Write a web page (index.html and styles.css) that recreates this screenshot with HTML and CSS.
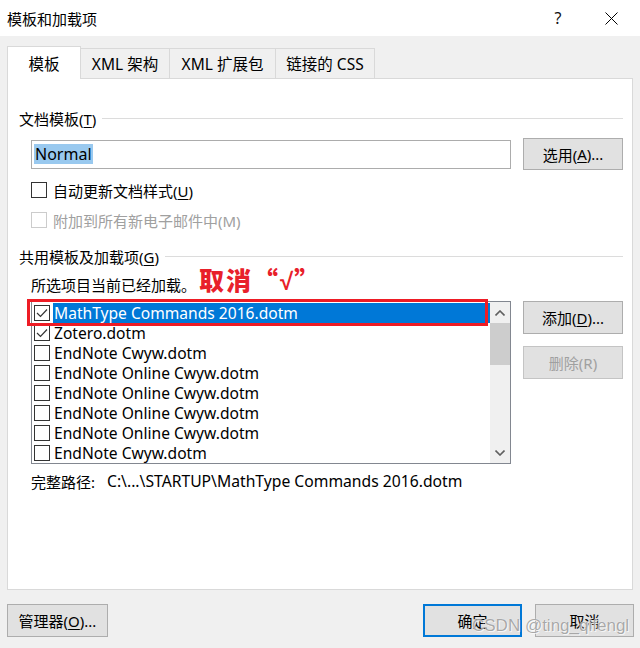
FILE: index.html
```html
<!DOCTYPE html>
<html lang="zh-CN">
<head>
<meta charset="utf-8">
<title>模板和加载项</title>
<link rel="stylesheet" href="styles.css">
</head>
<body>
<div class="dialog">
  <div class="titlebar">
    <span class="title">模板和加载项</span>
    <span class="help">?</span>
    <span class="close">
      <svg width="13" height="13" viewBox="0 0 13 13"><path d="M0.5 0.5 L12.5 12.5 M12.5 0.5 L0.5 12.5" stroke="#000" stroke-width="1" fill="none"/></svg>
    </span>
  </div>

  <div class="tabs">
    <div class="tab tab-sel">模板</div>
    <div class="tab tab-2">XML 架构</div>
    <div class="tab tab-3">XML 扩展包</div>
    <div class="tab tab-4">链接的 CSS</div>
  </div>

  <div class="panel">
    <div class="group-head"><span>文档模板(<u>T</u>)</span><i class="rule"></i></div>

    <div class="row-input">
      <div class="textbox"><span class="sel-text">Normal</span></div>
      <div class="btn btn-side">选用(<u>A</u>)...</div>
    </div>

    <div class="check-row check-row-1">
      <span class="cb"></span><span>自动更新文档样式(<u>U</u>)</span>
    </div>
    <div class="check-row check-row-2 disabled">
      <span class="cb cb-dis"></span><span>附加到所有新电子邮件中(M)</span>
    </div>

    <div class="group-head group-head-2"><span>共用模板及加载项(<u>G</u>)</span><i class="rule"></i></div>

    <div class="loaded-row">
      <span>所选项目当前已经加载。</span>
      <span class="note">取消“<span class="tick">√</span>”</span>
    </div>

    <div class="list-row">
      <div class="listbox">
        <div class="items">
          <div class="item item-sel">
            <span class="cb cb-on"><svg width="12" height="10" viewBox="0 0 12 10"><polyline points="1,5 4.5,8.5 11,1.5" fill="none" stroke="#333" stroke-width="1.2"/></svg></span>
            <span class="label">MathType Commands 2016.dotm</span>
          </div>
          <div class="item">
            <span class="cb cb-on"><svg width="12" height="10" viewBox="0 0 12 10"><polyline points="1,5 4.5,8.5 11,1.5" fill="none" stroke="#333" stroke-width="1.2"/></svg></span>
            <span class="label">Zotero.dotm</span>
          </div>
          <div class="item"><span class="cb"></span><span class="label">EndNote Cwyw.dotm</span></div>
          <div class="item"><span class="cb"></span><span class="label">EndNote Online Cwyw.dotm</span></div>
          <div class="item"><span class="cb"></span><span class="label">EndNote Online Cwyw.dotm</span></div>
          <div class="item"><span class="cb"></span><span class="label">EndNote Online Cwyw.dotm</span></div>
          <div class="item"><span class="cb"></span><span class="label">EndNote Online Cwyw.dotm</span></div>
          <div class="item"><span class="cb"></span><span class="label">EndNote Cwyw.dotm</span></div>
          <div class="red-box"></div>
        </div>
        <div class="scrollbar">
          <div class="arrow">
            <svg width="10" height="6" viewBox="0 0 10 6"><polyline points="0.5,5.5 5,1 9.5,5.5" fill="none" stroke="#606060" stroke-width="1.6"/></svg>
          </div>
          <div class="thumb"></div>
          <div class="track"></div>
          <div class="arrow">
            <svg width="10" height="6" viewBox="0 0 10 6"><polyline points="0.5,0.5 5,5 9.5,0.5" fill="none" stroke="#606060" stroke-width="1.6"/></svg>
          </div>
        </div>
      </div>
      <div class="side-btns">
        <div class="btn btn-side2">添加(<u>D</u>)...</div>
        <div class="btn btn-side2 btn-dis">删除(R)</div>
      </div>
    </div>

    <div class="path-row">
      <span class="path-label">完整路径:</span>
      <span class="path-val">C:\...\STARTUP\MathType Commands 2016.dotm</span>
    </div>
  </div>

  <div class="bottom">
    <div class="btn btn-mgr">管理器(<u>O</u>)...</div>
    <div class="spacer"></div>
    <div class="btn btn-ok">确定</div>
    <div class="btn btn-cancel">取消</div>
    <div class="watermark">CSDN @ting_qifengl</div>
  </div>
</div>
</body>
</html>
```

FILE: styles.css
```css
* { box-sizing: border-box; }
html, body { margin: 0; padding: 0; }
body {
  width: 640px;
  height: 648px;
  background: #f0f0f0;
  font-family: "Noto Sans", "Noto Sans CJK SC", sans-serif;
  font-size: 15px;
  color: #000;
  overflow: hidden;
}
u { text-decoration: underline; text-underline-offset: 2px; }

.dialog { position: relative; width: 640px; height: 648px; }

.titlebar {
  height: 36px;
  background: #fff;
  display: flex;
  align-items: center;
  padding-left: 7px;
}
.title { flex: 1; font-size: 15px; }
.help { width: 20px; text-align: center; font-size: 16px; margin-right: 37px; color: #111; }
.close { width: 13px; height: 13px; margin-right: 22px; display: flex; }

.tabs {
  display: flex;
  align-items: flex-end;
  margin-top: 10px;
  padding-left: 7px;
  height: 33px;
  margin-bottom: -1px;
  position: relative;
  z-index: 1;
}
.tab {
  height: 31px;
  border: 1px solid #d9d9d9;
  background: #f0f0f0;
  display: flex;
  align-items: center;
  justify-content: center;
  margin-left: -1px;
  font-size: 15.5px;
}
.tab-sel {
  margin-left: 0;
  width: 74px;
  height: 33px;
  background: #fff;
  border-bottom: none;
  position: relative;
  z-index: 2;
}
.tab-2 { width: 90px; }
.tab-3 { width: 107px; }
.tab-4 { width: 100px; }

.panel {
  margin: 0 7px;
  height: 512px;
  background: #fff;
  border: 1px solid #d9d9d9;
  padding: 0 9px 0 11px;
  display: flex;
  flex-direction: column;
}

.group-head {
  display: flex;
  align-items: center;
  height: 20px;
  margin-top: 29px;
}
.group-head .rule {
  flex: 1;
  height: 1px;
  background: #dcdcdc;
  margin-left: 6px;
}
.group-head-2 { margin-top: 16px; }

.row-input {
  display: flex;
  align-items: center;
  height: 32px;
  margin-top: 10px;
  padding-left: 12px;
}
.textbox {
  width: 480px;
  height: 29px;
  border: 1px solid #acacac;
  display: flex;
  align-items: center;
  padding-left: 2px;
}
.sel-text {
  background: #99c9ef;
  line-height: 20px;
  height: 20px;
  padding: 0 1px;
  font-size: 16px;
}

.btn {
  background: #e1e1e1;
  border: 1px solid #adadad;
  display: flex;
  align-items: center;
  justify-content: center;
  font-size: 15px;
}
.btn-side { width: 100px; height: 32px; margin-left: 12px; }

.check-row {
  display: flex;
  align-items: center;
  height: 20px;
  padding-left: 12px;
}
.check-row-1 { margin-top: 10px; }
.check-row-2 { margin-top: 10px; }
.check-row .cb { margin-right: 6px; }
.disabled { color: #a0a0a0; }

.cb {
  width: 16px;
  height: 16px;
  border: 1px solid #333;
  background: #fff;
  display: inline-flex;
  align-items: center;
  justify-content: center;
  flex: none;
}
.cb-dis { border-color: #cccccc; }
.cb-on { border-color: #333; }

.loaded-row {
  display: flex;
  align-items: center;
  height: 24px;
  margin-top: 6px;
  padding-left: 12px;
}
.note {
  color: #e8202a;
  font-family: "Noto Sans CJK SC", sans-serif;
  font-weight: 900;
  font-size: 25px;
  line-height: 28px;
  letter-spacing: 2px;
  margin-left: 3px;
  margin-top: -8px;
}
.note .tick {
  font-family: "Liberation Sans", sans-serif;
  font-weight: 700;
  font-size: 24px;
  letter-spacing: 1px;
}

.list-row {
  display: flex;
  align-items: flex-start;
  margin-top: 5px;
  padding-left: 12px;
}
.listbox {
  width: 480px;
  height: 163px;
  border: 1px solid #828790;
  display: flex;
  background: #fff;
}
.items {
  flex: 1;
  padding-top: 1px;
  position: relative;
}
.item {
  height: 20px;
  display: flex;
  align-items: center;
  padding-left: 2px;
}
.item .cb { margin-right: 3px; }
.item .label {
  flex: 1;
  height: 20px;
  line-height: 20px;
  padding-left: 1px;
  font-size: 15.6px;
}
.item-sel .label { background: #0078d7; color: #fff; }

.red-box {
  position: absolute;
  left: -5px;
  top: -3px;
  width: 461px;
  height: 27px;
  border: 3px solid #ee1c25;
}

.scrollbar {
  width: 20px;
  background: #f0f0f0;
  display: flex;
  flex-direction: column;
}
.arrow {
  height: 21px;
  display: flex;
  align-items: center;
  justify-content: center;
}
.thumb { height: 42px; background: #cdcdcd; }
.track { flex: 1; }

.side-btns {
  display: flex;
  flex-direction: column;
  gap: 12px;
  margin-left: 12px;
}
.btn-side2 { width: 100px; height: 33px; }
.btn-dis { color: #a0a0a0; border-color: #c4c4c4; }

.path-row {
  display: flex;
  align-items: center;
  height: 20px;
  margin-top: 7px;
  padding-left: 12px;
}
.path-label { width: 76px; }
.path-val { font-size: 15.7px; }

.bottom {
  display: flex;
  align-items: center;
  margin-top: 14px;
  padding: 0 6px 0 7px;
  position: relative;
}
.btn-mgr { width: 101px; height: 33px; }
.spacer { flex: 1; }
.btn-ok { width: 99px; height: 33px; border: 2px solid #0078d7; }
.btn-cancel { width: 99px; height: 33px; margin-left: 13px; }

.watermark {
  position: absolute;
  left: 472px;
  top: 12px;
  font-family: "Liberation Sans", sans-serif;
  font-size: 17px;
  color: rgba(140, 140, 140, 0.75);
  text-shadow: 0 0 1px #fff, 1px 1px 0 rgba(255,255,255,0.7);
  white-space: nowrap;
}
```
